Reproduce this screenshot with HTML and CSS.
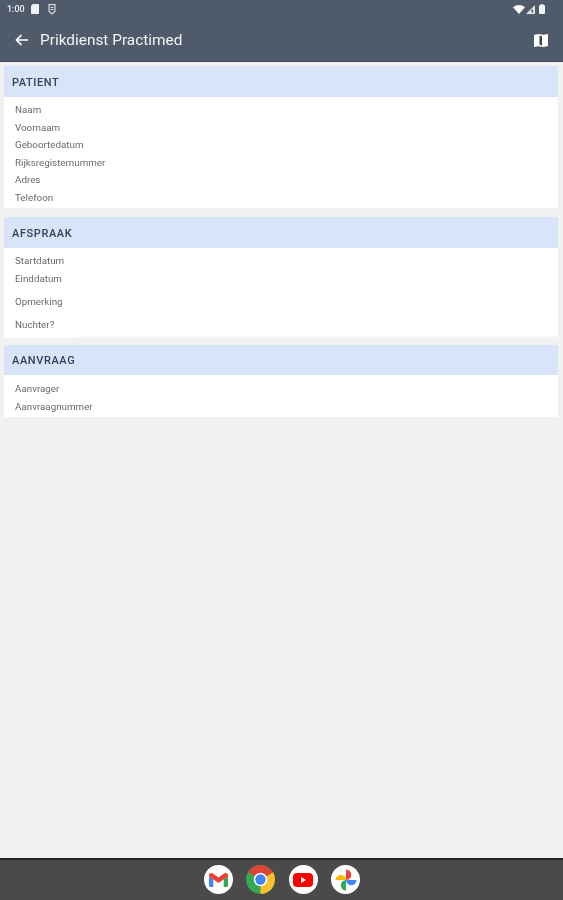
FILE: index.html
```html
<!DOCTYPE html>
<html lang="nl">
<head>
<meta charset="utf-8">
<title>Prikdienst Practimed</title>
<link rel="stylesheet" href="styles.css">
</head>
<body>
<div class="screen">
  <header class="appbar">
    <div class="status">
      <div class="status-left">
        <span class="time">1:00</span>
        <svg class="si" width="8" height="10" viewBox="0 0 9 10" preserveAspectRatio="none"><path d="M2 0h6a1 1 0 0 1 1 1v8a1 1 0 0 1-1 1H1a1 1 0 0 1-1-1V2z" fill="#eef0f3"/></svg>
        <svg class="si si-gap" width="8" height="11" viewBox="0 0 8 11"><path d="M1 .7h6v6.600L4 10 1 7.300z" fill="none" stroke="#d5d9df" stroke-width="1.200"/><path d="M2.500 3.500h3M2.500 5.500h3" stroke="#d5d9df"/></svg>
      </div>
      <div class="status-right">
        <svg width="12" height="9" viewBox="0 0 12 9"><path d="M0 2.200Q6-2 12 2.200L6 9z" fill="#fff"/></svg>
        <svg width="9" height="9" viewBox="0 0 9 9"><path d="M9 0v9H0z" fill="#dfe2e6"/><path d="M5.500 4.500h1.500v3H5.500z" fill="#4f5a6a"/></svg>
        <svg class="batt" width="6" height="10" viewBox="0 0 6 10"><path d="M1.500 1V.3h3V1H5a1 1 0 0 1 1 1v7a1 1 0 0 1-1 1H1a1 1 0 0 1-1-1V2a1 1 0 0 1 1-1z" fill="#f3f4f6"/></svg>
      </div>
    </div>
    <div class="toolbar">
      <svg class="back" width="14" height="12" viewBox="0 0 14 12"><path d="M13 6H2M6.500 1 1.500 6l5 5" fill="none" stroke="#fff" stroke-width="1.700"/></svg>
      <h1 class="title">Prikdienst Practimed</h1>
      <svg class="map" width="14" height="13" viewBox="0 0 14 13"><path d="M0 1 4.500 0l5 .8L14 0v12l-4.500 1-5-.8L0 13z" fill="#fff"/><path d="M5.500 1.500 8 2.500v9l-2.500-1z" fill="#3a4554"/></svg>
    </div>
  </header>

  <main class="content">
    <section class="card card-patient">
      <h2 class="card-head">PATIENT</h2>
      <div class="rows rows-patient">
        <div class="row">Naam</div>
        <div class="row">Voornaam</div>
        <div class="row">Geboortedatum</div>
        <div class="row">Rijksregisternummer</div>
        <div class="row">Adres</div>
        <div class="row">Telefoon</div>
      </div>
    </section>
    <section class="card card-afspraak">
      <h2 class="card-head">AFSPRAAK</h2>
      <div class="rows rows-afspraak">
        <div class="row">Startdatum</div>
        <div class="row">Einddatum</div>
        <div class="row row-note">Opmerking</div>
        <div class="row row-fast">Nuchter?</div>
      </div>
      <div class="rows-tail"></div>
    </section>
    <section class="card">
      <h2 class="card-head card-head-short">AANVRAAG</h2>
      <div class="rows rows-aanvraag">
        <div class="row">Aanvrager</div>
        <div class="row">Aanvraagnummer</div>
      </div>
    </section>
  </main>

  <footer class="dock">
    <span class="app">
      <svg width="19" height="14" viewBox="0 0 20 16" preserveAspectRatio="none">
        <path d="M0 4v10.500A1.500 1.500 0 0 0 1.500 16H4.500V7z" fill="#4285f4"/>
        <path d="M20 4v10.500a1.500 1.500 0 0 1-1.500 1.500h-3V7z" fill="#34a853"/>
        <path d="M15.500 2 20 1.500V4l-4.500 3z" fill="#fbbc04"/>
        <path d="M0 4V2.500C0 .5 2.300-.6 4 .7L10 5.200 16 .7c1.700-1.300 4-.2 4 1.800V4l-10 7.500z" fill="#ea4335"/>
      </svg>
    </span>
    <span class="app app-chrome">
      <svg width="29" height="29" viewBox="0 0 28 28">
        <circle cx="14" cy="14" r="14" fill="#34a853"/>
        <path d="M14 14 26.100 7A14 14 0 0 1 14 28z" fill="#fbc02d"/>
        <path d="M14 14 1.900 7A14 14 0 0 1 26.100 7z" fill="#db4437"/>
        <circle cx="14" cy="14" r="6.500" fill="#fff"/>
        <circle cx="14" cy="14" r="5" fill="#4285f4"/>
      </svg>
    </span>
    <span class="app">
      <svg width="20" height="14" viewBox="0 0 20 14">
        <rect width="20" height="14" rx="4" fill="#f00"/>
        <path d="M8 4v6l5-3z" fill="#fff"/>
      </svg>
    </span>
    <span class="app">
      <svg width="22" height="22" viewBox="0 0 22 22">
        <path d="M11 11H.5a5.250 5.250 0 0 1 10.500 0z" fill="#fbbc04"/>
        <path d="M11 11V.5a5.250 5.250 0 0 1 0 10.500z" fill="#ea4335"/>
        <path d="M11 11h10.500a5.250 5.250 0 0 1-10.500 0z" fill="#4285f4"/>
        <path d="M11 11v10.500a5.250 5.250 0 0 1 0-10.500z" fill="#34a853"/>
      </svg>
    </span>
  </footer>
</div>
</body>
</html>
```
FILE: styles.css
```css
* { box-sizing: border-box; }
html, body { margin: 0; padding: 0; }
body { font-family: Roboto, "Liberation Sans", sans-serif; background: #f1f1f1; }
.screen { width: 563px; height: 900px; display: flex; flex-direction: column; overflow: hidden; background: #f1f1f1; filter: blur(.35px); }

.appbar { height: 62px; flex: none; background: #4f5a6a; color: #fff; border-bottom: 1px solid #3f4a5a; }
.status { height: 18px; display: flex; justify-content: space-between; align-items: center; padding: 0 18px 0 7px; }
.status-left, .status-right { display: flex; align-items: center; gap: 5px; }
.status-right { gap: 1px; }
.batt { margin-left: 3px; }
.si-gap { margin-left: 4px; }
.time { font-size: 9px; font-weight: 500; color: #eef0f3; margin-right: 1px; }
.toolbar { height: 44px; display: flex; align-items: center; padding: 0 15px 0 15px; }
.back { flex: none; margin-right: 11px; }
.title { margin: 0; font-size: 15.400px; font-weight: 400; color: #f2f4f6; flex: 1; }
.map { flex: none; }

.content { flex: 1; padding: 4px 5px 0 4px; display: flex; flex-direction: column; gap: 7px; }
.card { background: #fff; }
.card-patient { margin-bottom: 2px; }
.card-afspraak { background: #f6f6f6; }
.card-head { margin: 0; height: 31px; background: #d8e4f7; color: #32405c; font-size: 11px; font-weight: 500; letter-spacing: .6px; padding-left: 8px; line-height: 33px; }
.card-head-short { height: 30px; line-height: 31px; }
.rows { padding: 4px 0 0 11px; background: #fff; }
.row { height: 17.600px; line-height: 17.600px; font-size: 9.800px; color: #6a6a6a; }
.row-note { height: 24px; line-height: 29px; }
.row-fast { height: 24px; line-height: 28px; }
.rows-patient { height: 111px; }
.rows-afspraak { height: 88px; }
.rows-tail { width: 74px; height: 2px; background: #fff; }
.rows-aanvraag { padding-top: 5px; padding-bottom: 1px; min-height: 42px; }

.dock { height: 42px; flex: none; background: #4a4a4a; border-top: 2px solid #1f2224; display: flex; justify-content: center; align-items: center; gap: 13.500px; padding: 0 0 1px 1px; }
.app { width: 29px; height: 29px; border-radius: 50%; background: #fff; display: flex; align-items: center; justify-content: center; }
.app-chrome { background: none; }
```
